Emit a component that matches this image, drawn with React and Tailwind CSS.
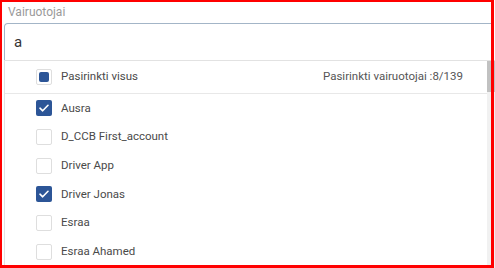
import React from "react";

const rows = [
  { name: "Ausra", checked: true },
  { name: "D_CCB First_account", checked: false },
  { name: "Driver App", checked: false },
  { name: "Driver Jonas", checked: true },
  { name: "Esraa", checked: false },
  { name: "Esraa Ahamed", checked: false },
];

function Check({ checked }) {
  if (checked) {
    return (
      <div className="w-[16px] h-[16px] rounded-[2px] bg-[#2c5597] flex items-center justify-center shrink-0">
        <svg width="10" height="8" viewBox="0 0 10 8" fill="none">
          <path d="M1 4.2 L3.7 6.8 L9 1.3" stroke="white" strokeWidth="1.6" strokeLinecap="round" strokeLinejoin="round" />
        </svg>
      </div>
    );
  }
  return <div className="w-[16px] h-[16px] rounded-[2px] border border-[#dedede] bg-white shrink-0" />;
}

export default function App() {
  return (
    <div className="relative w-[495px] h-[268px] bg-white overflow-hidden" style={{ fontFamily: "Roboto, 'Liberation Sans', sans-serif" }}>
      <div className="h-[23px] flex items-center pl-[8px] text-[12px] text-[#9a9a9a]">Vairuotojai</div>
      <div className="ml-[4px] w-[488px] h-[37px] border-t border-l border-r border-[#a3b5c7] rounded-tl-[4px] flex items-center pl-[9px] text-[15px] text-[#333]">
        a
      </div>
      <div className="ml-[4px] border-l border-t border-[#e2e2e2] flex h-[210px]">
        <div className="flex-1 flex flex-col">
          <div className="h-[33px] shrink-0 border-b border-[#e8e8e8] flex items-center pl-[31px] pr-[24px] text-[11.5px] text-[#4a4a4a]">
            <div className="w-[16px] h-[16px] rounded-[2px] border border-[#dedede] flex items-center justify-center shrink-0">
              <div className="w-[10px] h-[10px] rounded-[2px] bg-[#2c5597]" />
            </div>
            <span className="ml-[9px]">Pasirinkti visus</span>
            <span className="ml-auto text-[#555]">Pasirinkti vairuotojai :8/139</span>
          </div>
          {rows.map((r) => (
            <div key={r.name} className="h-[28.7px] shrink-0 flex items-center pl-[31px] text-[11.5px] text-[#4a4a4a]">
              <Check checked={r.checked} />
              <span className="ml-[9px]">{r.name}</span>
            </div>
          ))}
        </div>
        <div className="w-[8px] bg-[#f1f1f1] flex flex-col">
          <div className="h-[31px] bg-[#c1c1c1]" />
        </div>
      </div>
      <div className="absolute left-0 top-0 w-[494px] h-[268px] border-l-2 border-t-2 border-r-[3px] border-b-[3px] border-[#ff0000] pointer-events-none" />
    </div>
  );
}
